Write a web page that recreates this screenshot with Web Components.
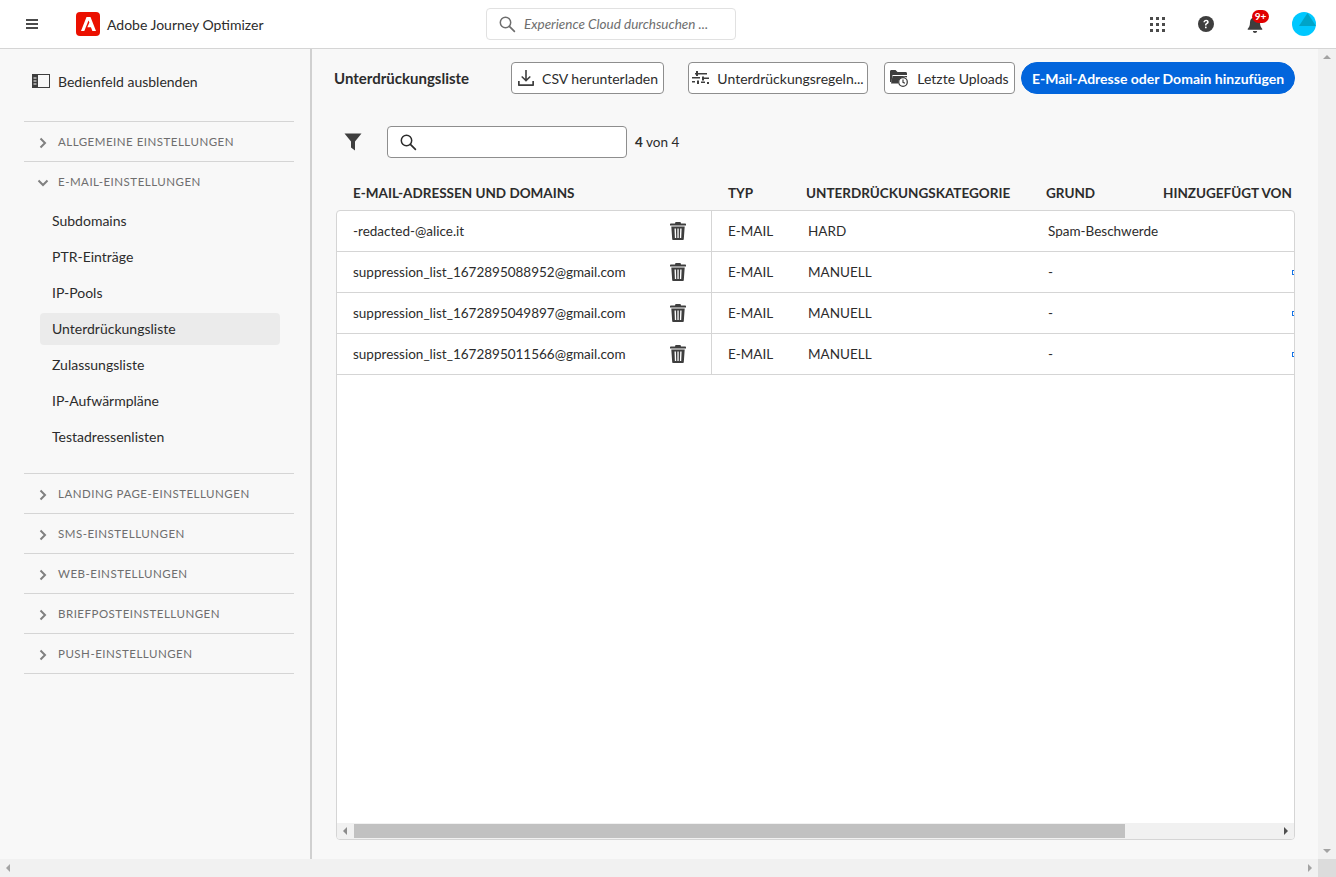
<!DOCTYPE html>
<html lang="de">
<head>
<meta charset="utf-8">
<title>Adobe Journey Optimizer</title>
<style>
  html, body { margin: 0; height: 100%; overflow: hidden; }
  body { font-family: Lato, "Noto Sans", "Liberation Sans", sans-serif; font-size: 14px; color: #2c2c2c; background: #f8f8f8; }
</style>
</head>
<body>
<ajo-app></ajo-app>

<script>
const icons = {
  search: '<svg width="18" height="18" viewBox="0 0 18 18"><circle cx="7.5" cy="7.5" r="5.2" fill="none" stroke="currentColor" stroke-width="1.5"/><path d="M11.4 11.4l5 5" stroke="currentColor" stroke-width="1.7" stroke-linecap="round"/></svg>',
  chevronRight: '<svg width="10" height="12" viewBox="0 0 10 12"><path d="M2.5 1.5L7 6l-4.5 4.5" fill="none" stroke="#808080" stroke-width="2"/></svg>',
  chevronDown: '<svg width="12" height="10" viewBox="0 0 12 10"><path d="M1.5 2.5L6 7l4.5-4.5" fill="none" stroke="#808080" stroke-width="2"/></svg>',
  trash: '<svg width="16" height="18" viewBox="0 0 16 18" fill="#3e3e3e"><path d="M5.5 0h5l.5 1.5h4.3c.4 0 .7.3.7.7v1.3H0V2.200c0-.4.3-.7.7-.7H5zM1.300 4.500h13.400L13.800 17c0 .6-.5 1-1 1H3.200c-.5 0-1-.4-1-1zM4.500 6.500l.4 9.500h1.300l-.3-9.500zm2.900 0V16h1.300V6.500zm2.800 0L9.900 16h1.300l.4-9.500z"/></svg>',
  download: '<svg width="18" height="18" viewBox="0 0 18 18" fill="#3e3e3e"><path d="M8.200 1h1.600v8.800l3-2.900 1 1.100L9 12.700 4.200 8l1-1.100 3 2.900z"/><path d="M1 12h1.700v3.300h12.600V12H17v4c0 .6-.4 1-1 1H2c-.6 0-1-.4-1-1z"/></svg>',
  rules: '<svg width="18" height="14" viewBox="0 0 18 14" fill="#3e3e3e"><path d="M4 0h2v2h9v1.500H6v1.500H4V3.500H3V2h1zM0 6h8v1.500H0zM10 5.500h2v1h5V8h-5v1.500h-2zM0 10h3v1.500H0zM5 9.500h2v3.500H5V12H5zM9 10.500h4V12H9zM15 11h2v2h-2z"/></svg>',
  uploads: '<svg width="20" height="18" viewBox="0 0 20 18"><path d="M0 2.500C0 1.700.6 1 1.400 1h4.100l2 2h8.100c.8 0 1.400.6 1.400 1.400V6H2.500L1.500 13H0z" fill="#3e3e3e"/><path d="M1 14.500L2.600 7H17v1.600a6 6 0 0 0-8.800 5.900z" fill="#3e3e3e"/><circle cx="13" cy="13" r="4.300" fill="none" stroke="#3e3e3e" stroke-width="1.300"/><path d="M13 10.500V13.300l1.900 1" fill="none" stroke="#3e3e3e" stroke-width="1.200"/></svg>',
  funnel: '<svg width="18" height="18" viewBox="0 0 18 18"><path d="M.5.5h17L11 8.500V17.500L7 14.500V8.500z" fill="#3e3e3e"/></svg>'
};

class AjoTopbar extends HTMLElement {
  connectedCallback() {
    this.attachShadow({ mode: 'open' });
    this.shadowRoot.innerHTML = `
      <style>
        :host { display: flex; align-items: center; height: 49px; box-sizing: border-box; background: #fff; border-bottom: 1px solid #d5d5d5; position: relative; flex: none; }
        .burger { width: 12px; height: 10px; margin-left: 26px; border-top: 2px solid #4b4b4b; border-bottom: 2px solid #4b4b4b; position: relative; box-sizing: border-box; }
        .burger::after { content: ''; position: absolute; left: 0; right: 0; top: 2px; height: 2px; background: #4b4b4b; }
        .logo { width: 24px; height: 24px; margin-left: 38px; background: #eb1000; border-radius: 4px; display: flex; align-items: center; justify-content: center; }
        .name { margin-left: 7px; width: 379px; font-size: 14px; color: #2c2c2c; white-space: nowrap; }
        .search { width: 250px; height: 32px; box-sizing: border-box; border: 1px solid #e1e1e1; border-radius: 4px; display: flex; align-items: center; color: #6e6e6e; padding-left: 11px; }
        .search span { margin-left: 8px; font-style: italic; font-size: 13.5px; white-space: nowrap; }
        .right { margin-left: auto; display: flex; align-items: center; }
        .grid { display: grid; grid-template-columns: repeat(3, 3px); gap: 3px; margin-right: 33px; }
        .grid i { width: 3px; height: 3px; background: #4b4b4b; }
        .bell { position: relative; width: 16px; height: 17px; margin: 0 29px 0 33px; }
        .badge { position: absolute; left: 5px; top: -6px; width: 17px; height: 13px; background: #e00000; color: #fff; border-radius: 7px; font-size: 10px; font-weight: 700; text-align: center; line-height: 12px; }
        .avatar { margin-right: 20px; display: block; }
      </style>
      <div class="burger"></div>
      <div class="logo"><svg width="15" height="14" viewBox="0 0 15 14"><path d="M5.500 0h4L15 14h-3.600L9.900 10.200H6.300L8.500 5.200 10 9 7.500 3.500 3.300 14H0z" fill="#fff"/></svg></div>
      <div class="name">Adobe Journey Optimizer</div>
      <div class="search">${icons.search}<span>Experience Cloud durchsuchen ...</span></div>
      <div class="right">
        <div class="grid">${'<i></i>'.repeat(9)}</div>
        <svg width="16" height="16" viewBox="0 0 16 16"><circle cx="8" cy="8" r="8" fill="#3e3e3e"/><path d="M5.400 6.200C5.500 4.700 6.600 3.700 8.100 3.700c1.500 0 2.600.9 2.600 2.200 0 1-.5 1.600-1.400 2.100-.6.400-.8.700-.8 1.300v.2H7V9c0-1 .4-1.600 1.200-2.100.6-.4.800-.6.800-1 0-.5-.4-.8-.9-.8-.6 0-1 .4-1.100 1.100z" fill="#fff"/><rect x="7" y="10.600" width="1.600" height="1.700" rx=".4" fill="#fff"/></svg>
        <div class="bell">
          <svg width="16" height="17" viewBox="0 0 16 17"><path d="M8 0c.7 0 1.200.5 1.200 1.200C11.500 1.800 13 3.700 13 6.200c0 3.400.8 5 2.200 6.600.3.400.1 1-.5 1H1.300c-.6 0-.8-.6-.5-1C2.200 11.200 3 9.600 3 6.200 3 3.700 4.500 1.800 6.800 1.200 6.800.5 7.300 0 8 0zM5.900 15h4.200c0 1.100-.9 2-2.100 2s-2.100-.9-2.100-2z" fill="#3e3e3e"/></svg>
          <span class="badge">9+</span>
        </div>
        <svg class="avatar" width="24" height="24" viewBox="0 0 24 24"><circle cx="12" cy="12" r="12" fill="#00c8ff"/><path d="M7 14L15.500 1 24 14z" fill="#00a4c8"/></svg>
      </div>
    `;
  }
}

class NavGroup extends HTMLElement {
  connectedCallback() {
    const open = this.hasAttribute('open');
    this.attachShadow({ mode: 'open' });
    this.shadowRoot.innerHTML = `
      <style>
        :host { display: block; border-bottom: 1px solid #d5d5d5; }
        .head { height: 39px; display: flex; align-items: center; font-size: 11.5px; letter-spacing: .5px; color: #6e6e6e; white-space: nowrap; }
        .head b { font-weight: 400; margin-top: -1px; }
        .ico { width: 34px; display: flex; justify-content: center; padding-left: 4px; padding-top: 2px; box-sizing: border-box; flex: none; }
        .items { padding: 2px 14px 18px 16px; }
      </style>
      <div class="head"><span class="ico">${open ? icons.chevronDown : icons.chevronRight}</span><b>${this.getAttribute('label')}</b></div>
      ${open ? '<div class="items"><slot></slot></div>' : ''}
    `;
  }
}

class NavItem extends HTMLElement {
  connectedCallback() {
    this.attachShadow({ mode: 'open' });
    this.shadowRoot.innerHTML = `
      <style>
        :host { display: block; padding: 2px 0; }
        div { height: 32px; line-height: 32px; padding-left: 12px; border-radius: 4px; font-size: 14px; color: #2c2c2c; white-space: nowrap; }
        :host([selected]) div { background: #ebebeb; }
      </style>
      <div><slot></slot></div>
    `;
  }
}

class AjoSidenav extends HTMLElement {
  connectedCallback() {
    this.attachShadow({ mode: 'open' });
    this.shadowRoot.innerHTML = `
      <style>
        :host { display: block; width: 312px; flex: none; box-sizing: border-box; padding: 16px 16px 0 24px; border-right: 2px solid #d0d0d0; }
        .toggle { display: flex; align-items: center; height: 32px; padding-left: 8px; font-size: 14px; color: #2c2c2c; margin-bottom: 24px; }
        .toggle svg { margin-right: 8px; }
        .groups { border-top: 1px solid #d5d5d5; }
      </style>
      <div class="toggle">
        <svg width="18" height="14" viewBox="0 0 18 14"><rect x=".5" y=".5" width="17" height="13" fill="none" stroke="#3e3e3e"/><rect x="0" y="0" width="6" height="14" fill="#3e3e3e"/><path d="M1.500 4h3M1.500 7h3M1.500 10h3" stroke="#fff"/></svg>
        Bedienfeld ausblenden
      </div>
      <div class="groups">
        <nav-group label="ALLGEMEINE EINSTELLUNGEN"></nav-group>
        <nav-group label="E-MAIL-EINSTELLUNGEN" open>
          <nav-item>Subdomains</nav-item>
          <nav-item>PTR-Einträge</nav-item>
          <nav-item>IP-Pools</nav-item>
          <nav-item selected>Unterdrückungsliste</nav-item>
          <nav-item>Zulassungsliste</nav-item>
          <nav-item>IP-Aufwärmpläne</nav-item>
          <nav-item>Testadressenlisten</nav-item>
        </nav-group>
        <nav-group label="LANDING PAGE-EINSTELLUNGEN"></nav-group>
        <nav-group label="SMS-EINSTELLUNGEN"></nav-group>
        <nav-group label="WEB-EINSTELLUNGEN"></nav-group>
        <nav-group label="BRIEFPOSTEINSTELLUNGEN"></nav-group>
        <nav-group label="PUSH-EINSTELLUNGEN"></nav-group>
      </div>
    `;
  }
}

class AjoButton extends HTMLElement {
  connectedCallback() {
    const icon = icons[this.getAttribute('icon')] || '';
    this.attachShadow({ mode: 'open' });
    this.shadowRoot.innerHTML = `
      <style>
        :host { display: block; flex: none; }
        button { all: unset; box-sizing: border-box; height: 32px; display: flex; align-items: center; justify-content: center; gap: 7px; width: 100%; border: 1px solid #8e8e8e; border-radius: 4px; background: #fff; font-size: 14px; color: #2c2c2c; white-space: nowrap; }
        :host([primary]) button { background: #0265dc; border-color: #0265dc; border-radius: 16px; color: #fff; font-weight: 700; font-size: 14px; }
      </style>
      <button>${icon}<slot></slot></button>
    `;
  }
}

class ListRow extends HTMLElement {
  connectedCallback() {
    const cells = this.getAttribute('cells').split('|');
    this.attachShadow({ mode: 'open' });
    this.shadowRoot.innerHTML = `
      <style>
        :host { display: grid; grid-template-columns: 375px 80px 240px 1fr; height: 41px; box-sizing: border-box; border-bottom: 1px solid #d5d5d5; align-items: stretch; position: relative; font-size: 13.5px; color: #2c2c2c; white-space: nowrap; }
        div { display: flex; align-items: center; padding-left: 16px; }
        .first { border-right: 1px solid #d5d5d5; justify-content: space-between; padding-right: 25px; }
        .clip { position: absolute; right: 0; top: 18px; width: 2px; height: 5px; border: 1px solid #1473e6; border-right: 0; box-sizing: border-box; padding: 0; }
      </style>
      <div class="first"><span>${cells[0]}</span>${icons.trash}</div>
      <div>${cells[1]}</div>
      <div>${cells[2]}</div>
      <div>${cells[3]}</div>
      ${this.hasAttribute('clipped') ? '<div class="clip"></div>' : ''}
    `;
  }
}

class HScrollbar extends HTMLElement {
  connectedCallback() {
    this.attachShadow({ mode: 'open' });
    this.shadowRoot.innerHTML = `
      <style>
        :host { display: flex; height: 16px; background: #f1f1f1; align-items: center; position: relative; flex: none; }
        .thumb { position: absolute; left: 17px; width: 771px; top: 1px; height: 14px; background: #c1c1c1; }
        .l, .r { position: absolute; top: 4px; border-style: solid; border-color: transparent; border-width: 4px 0 4px 4px; }
        .l { left: 6px; border-width: 4px 4px 4px 0; border-right-color: #8c8c8c; }
        .r { right: 6px; border-left-color: #505050; }
      </style>
      <span class="l"></span><span class="thumb"></span><span class="r"></span>
    `;
  }
}

class SuppressionTable extends HTMLElement {
  connectedCallback() {
    this.attachShadow({ mode: 'open' });
    this.shadowRoot.innerHTML = `
      <style>
        :host { display: flex; flex-direction: column; flex: 1; min-height: 0; margin: 0 23px 19px 24px; }
        .head { height: 34px; display: grid; grid-template-columns: 376px 78px 241px 132px 1fr; align-items: center; font-size: 13.5px; font-weight: 700; color: #2c2c2c; white-space: nowrap; flex: none; }
        .head span:first-child { padding-left: 17px; }
        .head span:nth-child(2) { padding-left: 16px; }
        .head span:nth-child(3) { padding-left: 16px; }
        .head span:nth-child(4) { padding-left: 15px; }
        .box { flex: 1; min-height: 0; display: flex; flex-direction: column; background: #fff; border: 1px solid #d5d5d5; border-radius: 4px; overflow: hidden; }
        .rows { flex: 1; }
      </style>
      <div class="head"><span>E-MAIL-ADRESSEN UND DOMAINS</span><span>TYP</span><span>UNTERDRÜCKUNGSKATEGORIE</span><span>GRUND</span><span>HINZUGEFÜGT VON</span></div>
      <div class="box">
        <div class="rows">
          <list-row cells="-redacted-@alice.it|E-MAIL|HARD|Spam-Beschwerde"></list-row>
          <list-row clipped cells="suppression_list_1672895088952@gmail.com|E-MAIL|MANUELL|-"></list-row>
          <list-row clipped cells="suppression_list_1672895049897@gmail.com|E-MAIL|MANUELL|-"></list-row>
          <list-row clipped cells="suppression_list_1672895011566@gmail.com|E-MAIL|MANUELL|-"></list-row>
        </div>
        <h-scrollbar></h-scrollbar>
      </div>
    `;
  }
}

class AjoContent extends HTMLElement {
  connectedCallback() {
    this.attachShadow({ mode: 'open' });
    this.shadowRoot.innerHTML = `
      <style>
        :host { display: flex; flex-direction: column; flex: 1; min-width: 0; }
        .bar { display: flex; align-items: center; height: 32px; padding: 13px 0 0 22px; flex: none; }
        h1 { margin: 0; width: 177px; flex: none; font-size: 15px; font-weight: 700; color: #2c2c2c; white-space: nowrap; }
        .filter { display: flex; align-items: center; padding: 32px 0 0 32px; height: 32px; flex: none; margin-bottom: 18px; font-size: 13.5px; }
        .field { width: 240px; height: 32px; box-sizing: border-box; margin-left: 25px; border: 1px solid #8e8e8e; border-radius: 4px; background: #fff; display: flex; align-items: center; padding-left: 11px; color: #2c2c2c; }
        .count { margin-left: 8px; }
      </style>
      <div class="bar">
        <h1>Unterdrückungsliste</h1>
        <ajo-button icon="download" style="width:153px">CSV herunterladen</ajo-button>
        <ajo-button icon="rules" style="width:180px;margin-left:24px">Unterdrückungsregeln...</ajo-button>
        <ajo-button icon="uploads" style="width:131px;margin-left:16px">Letzte Uploads</ajo-button>
        <ajo-button primary style="width:274px;margin-left:6px">E-Mail-Adresse oder Domain hinzufügen</ajo-button>
      </div>
      <div class="filter">
        ${icons.funnel}
        <div class="field">${icons.search}</div>
        <span class="count"><b>4</b> von 4</span>
      </div>
      <suppression-table></suppression-table>
    `;
  }
}

class VScrollbar extends HTMLElement {
  connectedCallback() {
    this.attachShadow({ mode: 'open' });
    this.shadowRoot.innerHTML = `
      <style>
        :host { display: flex; flex-direction: column; justify-content: space-between; align-items: center; width: 18px; flex: none; background: #f1f1f1; padding: 6px 0; box-sizing: border-box; }
        i { border-style: solid; border-color: transparent; border-width: 0 4px 4px; border-bottom-color: #a3a3a3; }
        i:last-child { border-width: 4px 4px 0; border-top-color: #a3a3a3; }
      </style>
      <i></i><i></i>
    `;
  }
}

class BottomScrollbar extends HTMLElement {
  connectedCallback() {
    this.attachShadow({ mode: 'open' });
    this.shadowRoot.innerHTML = `
      <style>
        :host { display: flex; align-items: center; justify-content: space-between; height: 18px; flex: none; background: #f1f1f1; padding-left: 6px; }
        i { border-style: solid; border-color: transparent; border-width: 4px 4px 4px 0; border-right-color: #a3a3a3; }
        .end { display: flex; align-items: center; }
        .end i { border-width: 4px 0 4px 4px; border-right-color: transparent; border-left-color: #a3a3a3; margin-right: 6px; }
        .corner { width: 18px; height: 18px; background: #dcdcdc; }
      </style>
      <i></i><div class="end"><i></i><div class="corner"></div></div>
    `;
  }
}

class AjoApp extends HTMLElement {
  connectedCallback() {
    this.attachShadow({ mode: 'open' });
    this.shadowRoot.innerHTML = `
      <style>
        :host { display: flex; flex-direction: column; height: 877px; overflow: hidden; background: #f8f8f8; }
        main { flex: 1; min-height: 0; display: flex; }
      </style>
      <ajo-topbar></ajo-topbar>
      <main>
        <ajo-sidenav></ajo-sidenav>
        <ajo-content></ajo-content>
        <v-scrollbar></v-scrollbar>
      </main>
      <bottom-scrollbar></bottom-scrollbar>
    `;
  }
}

customElements.define('ajo-topbar', AjoTopbar);
customElements.define('nav-group', NavGroup);
customElements.define('nav-item', NavItem);
customElements.define('ajo-sidenav', AjoSidenav);
customElements.define('ajo-button', AjoButton);
customElements.define('list-row', ListRow);
customElements.define('h-scrollbar', HScrollbar);
customElements.define('suppression-table', SuppressionTable);
customElements.define('ajo-content', AjoContent);
customElements.define('v-scrollbar', VScrollbar);
customElements.define('bottom-scrollbar', BottomScrollbar);
customElements.define('ajo-app', AjoApp);
</script>
</body>
</html>
